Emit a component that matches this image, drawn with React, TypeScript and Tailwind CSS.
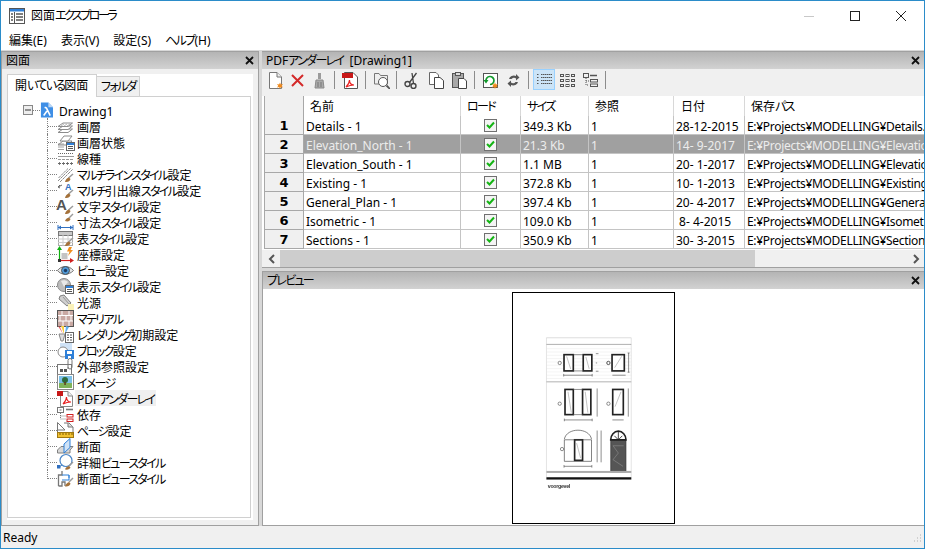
import React from "react";

const J = ({ t, tight }: { t: string; tight?: boolean }) => (
  <>
    {t.split(/([\u3040-\u30FF]+)/).map((s, i) =>
      i % 2 === 1 ? (
        <span key={i} className={tight ? "tracking-[-2.5px]" : "tracking-[-1.7px]"}>{s}</span>
      ) : (
        <span key={i}>{s}</span>
      )
    )}
  </>
);

const B = () => (
  <g>
    <path d="M16 8 L11.5 12" stroke="#9a9a9a" strokeWidth="1.5" />
    <path d="M8 16 C8.5 13.5 10 12 12 11.5 L13.5 13 C13 15 11 16.5 8 16 Z" fill="#a4713a" />
  </g>
);
const MiniDoc = ({ x = 9, y = 8 }: { x?: number; y?: number }) => (
  <g>
    <rect x={x + 0.5} y={y + 0.5} width="8" height="8" fill="#fff" stroke="#666" />
    <rect x={x + 1} y={y + 1} width="7" height="2" fill="#2f80d8" />
    <path d={`M${x + 2} ${y + 4.5}h5M${x + 2} ${y + 6.5}h5`} stroke="#555" />
  </g>
);

const treeIcons: React.ReactNode[] = [
  <g fill="#fff" stroke="#8c8c8c"><path d="M1 14.5 L6 11 H15.5 L11 14.5Z" /><path d="M1 11.5 L6 8 H15.5 L11 11.5Z" /><path d="M1 8.5 L6 5 H15.5 L11 8.5Z" /><path d="M4 8l3-2M7 8l3-2M10 8l3-2" strokeWidth=".6" /></g>,
  <g><g fill="#fff" stroke="#8c8c8c"><path d="M1 11 L6 7 H15 L11 11Z" /><path d="M3 7 L7 2 H15 L11 7Z" /><path d="M1 10h6M1 13h6M1 15.5h6" strokeWidth=".8" /></g><MiniDoc /></g>,
  <g stroke="#666"><path d="M1 3.5h16" strokeDasharray="1 1" /><path d="M1 6.5h16" stroke="#999" /><path d="M1 9.5h16" strokeDasharray="3 1" stroke="#999" /><path d="M1 13.5h16" strokeDasharray="3 1" strokeWidth="1" /><path d="M2.5 12v3M6.5 12v3M10.5 12v3M14.5 12v3" strokeWidth=".8" /></g>,
  <g><path d="M1 15 L14 2M3 16 L16 3M1.5 12 L11 2.5" stroke="#8c8c8c" strokeWidth="1" strokeDasharray="3 .7" /><B /></g>,
  <g><text x="8" y="8" fontSize="9" fontWeight="700" fill="#2f6fc0" fontFamily="Liberation Sans">A</text><path d="M1 5 L5 3M1 5l2-2M1 5l2 1" stroke="#666" fill="none" /><B /></g>,
  <g><text x="-1" y="12" fontSize="15" fontWeight="700" fill="#555" fontFamily="Liberation Sans">A</text><B /></g>,
  <g><path d="M1 13.5 H16 M1 11v5M16 11v5" stroke="#2f6fc0" fill="none" /><path d="M1 13.5l3-2v4ZM16 13.5l-3-2v4Z" fill="#2f6fc0" /><g transform="translate(0,-7)"><path d="M8 14 C8.5 12 10 11 12 10.5 L13.5 12 C13 14 11 15 8 14Z" fill="#a4713a" /><path d="M16 7 L12 11" stroke="#9a9a9a" strokeWidth="1.5" /></g></g>,
  <g><rect x="1.5" y="1.5" width="14" height="14" fill="#fff" stroke="#aaa" /><rect x="1.5" y="1.5" width="14" height="4" fill="#c8c8c8" stroke="#777" /><path d="M1 9h15M1 12.5h15M6 5v11M11 5v11" stroke="#ccc" /><B /></g>,
  <g><path d="M2.5 15V3" stroke="#10b010" strokeWidth="1.2" /><path d="M2.5 0l-2.5 4h5Z" fill="#10b010" /><path d="M2 14.5h13" stroke="#d02020" strokeWidth="1.2" /><path d="M17 14.5l-4-2.5v5Z" fill="#d02020" /><rect x="4.5" y="7" width="6" height="6" fill="#c4c4c4" /><rect x="1" y="13" width="3" height="3" fill="#333" /><path d="M12 1 L15 1 L13.5 4 L16 4 L11 10 L12.5 5.5 L10 5.5Z" fill="#f09020" /></g>,
  <g><path d="M0.5 8.5 C4 3.5 12 3 16.5 8.5 C12 13.5 4 13.5 0.5 8.5Z" fill="#e6e6e6" stroke="#777" /><circle cx="8.5" cy="8.5" r="4" fill="#4f9ad8" stroke="#555" /><circle cx="8.5" cy="8.5" r="1.7" fill="#1c3c64" /></g>,
  <g><circle cx="7" cy="7" r="6.5" fill="#bdbdbd" stroke="#8a8a8a" /><path d="M4 3 C6 1.5 9 2 11 4 L7 9 Z" fill="#e8e8e8" /><MiniDoc x={8} y={7} /></g>,
  <g><path d="M3 2 L7 1 L14 9 L10 12 L2 5Z" fill="#cfcfcf" stroke="#808080" /><path d="M6 3 L12 10" stroke="#999" /><rect x="11" y="10" width="6" height="6" fill="#fbf2b8" /></g>,
  <g><rect x=".5" y=".5" width="16" height="16" fill="#c9a9a3" stroke="#555" /><path d="M1 5.5h15M1 11h15M5 1v4M12 1v4M3 6v5M9 6v5M14 6v5M6 11v5M12 11v5" stroke="#fff" /></g>,
  <g><path d="M1 0 L6 8 L3 1Z" fill="#f06060" /><path d="M4 0 L7 8 L7 0Z" fill="#f8d040" /><path d="M9 0 L8 8 L12 1Z" fill="#60b0f0" /><path d="M2 8 L8 8 L6 15 L4 15Z" fill="#ddd" stroke="#888" /><rect x="8.5" y="6.5" width="8" height="10" fill="#fff" stroke="#666" /><path d="M10 9h5M10 11.5h5M10 14h5" stroke="#555" strokeDasharray="2 1" /></g>,
  <g><rect x="3" y="1" width="12" height="12" fill="#cfe2f6" /><circle cx="6" cy="10" r="5" fill="#fff" stroke="#888" /><rect x="8" y="8" width="9" height="9" fill="#2f80d8" /><rect x="10" y="9" width="5" height="3" fill="#fff" /><rect x="11" y="14" width="3" height="3" fill="#fff" /></g>,
  <g><rect x=".5" y="6.5" width="14" height="10" fill="#fff" stroke="#777" /><rect x="3" y="11" width="3" height="3" fill="#555" /><rect x="7" y="11" width="3" height="3" fill="#555" /><path d="M11 11V2.5a2 2 0 0 1 4 0V9a2 2 0 0 1-4 0" fill="none" stroke="#777" /></g>,
  <g><rect x=".5" y=".5" width="16" height="15" fill="#fff" stroke="#888" /><rect x="2" y="2" width="13" height="7" fill="#7dc0e8" /><rect x="2" y="9" width="13" height="5" fill="#7fb35a" /><circle cx="8" cy="6" r="3" fill="#2d6a3a" /><rect x="7.3" y="8" width="1.5" height="3" fill="#5c3a1c" /></g>,
  <g><path d="M3.5 1.5H11L15.5 6V16.5H3.5Z" fill="#fff" stroke="#888" /><path d="M11 1.5V6H15.5" fill="#eee" stroke="#888" /><rect x="0" y="1" width="6" height="5" fill="#c81818" /><path d="M6 14 C9 11 9.5 8 9.5 7 C9.5 10 11 12 14 12 C11 12 8 13 6 14Z" fill="none" stroke="#e82020" strokeWidth="1.1" /></g>,
  <g><rect x=".5" y="1.5" width="6" height="5" fill="#fff" stroke="#777" /><path d="M2.5 4h2" stroke="#777" /><path d="M9 3.5h7" stroke="#777" strokeWidth="1.6" /><path d="M3.5 7v6h5M3.5 10h5" stroke="#777" strokeDasharray="1 1" fill="none" /><rect x="10" y="8.5" width="6" height="2.5" fill="#fff" stroke="#d02020" /><rect x="10" y="13" width="6" height="2.5" fill="#fff" stroke="#d02020" /></g>,
  <g><path d="M.5 .5 L8 8 H.5Z M.5 8 V11 H16 V5 L12 1 H7" fill="#fff" stroke="#777" /><path d="M11 1V5H16" fill="#ddd" stroke="#777" /><rect x=".5" y="10.5" width="16" height="5" fill="#f0c030" stroke="#a07810" /><path d="M3 11v2M6 11v2M9 11v2M12 11v2M15 11v2" stroke="#805f00" /></g>,
  <g><path d="M.5 12 L4 8.5 H16 L13 12 V15 H.5Z" fill="#d8d8d8" stroke="#808080" /><path d="M7 15 V6 L13 .5 V9.5 Z" fill="#cfe2f6" stroke="#2f80d8" /></g>,
  <g><circle cx="9" cy="6.5" r="6" fill="#fff" stroke="#4a86c8" strokeWidth="1.2" /><rect x="0" y="11" width="3.5" height="3.5" fill="#2f6fc0" /><path d="M3 12.5 L5 11" stroke="#4a86c8" /><path d="M16 8 L12 12" stroke="#9a9a9a" strokeWidth="1.5" /><path d="M8 15.5 C8.5 13.5 10 12.5 12 12 L13.5 13.5 C13 15 11 16 8 15.5Z" fill="#a4713a" /></g>,
  <g><path d="M1.5 16V5 H5 V1 M1.5 16H5V12H8V16" fill="#fff" stroke="#777" strokeWidth="1.3" /><path d="M5 5h7v5H5M12 5v3" fill="none" stroke="#2f80d8" /><path d="M16 8 L12 12" stroke="#9a9a9a" strokeWidth="1.5" /><path d="M8 16.5 C8.5 14 10 13 12 12 L13.5 13.5 C13 15.5 11 17 8 16.5Z" fill="#a4713a" /></g>,
];

const treeLabels = [
  "画層", "画層状態", "線種", "マルチラインスタイル設定", "マルチ引出線スタイル設定", "文字スタイル設定",
  "寸法スタイル設定", "表スタイル設定", "座標設定", "ビュー設定", "表示スタイル設定", "光源", "マテリアル",
  "レンダリング初期設定", "ブロック設定", "外部参照設定", "イメージ", "PDFアンダーレイ", "依存", "ページ設定",
  "断面", "詳細ビュースタイル", "断面ビュースタイル",
];

const rows = [
  ["Details - 1", "349.3 Kb", "28-12-2015", "E:¥Projects¥MODELLING¥Details.pdf"],
  ["Elevation_North - 1", "21.3 Kb", "14- 9-2017", "E:¥Projects¥MODELLING¥Elevation.pdf"],
  ["Elevation_South - 1", "1.1 MB", "20- 1-2017", "E:¥Projects¥MODELLING¥Elevation.pdf"],
  ["Existing - 1", "372.8 Kb", "10- 1-2013", "E:¥Projects¥MODELLING¥Existing.pdf"],
  ["General_Plan - 1", "397.4 Kb", "20- 4-2017", "E:¥Projects¥MODELLING¥General.pdf"],
  ["Isometric - 1", "109.0 Kb", " 8- 4-2015", "E:¥Projects¥MODELLING¥Isometric.pdf"],
  ["Sections - 1", "350.9 Kb", "30- 3-2015", "E:¥Projects¥MODELLING¥Sections.pdf"],
];

const Star = () => <path d="M13 10.5l.9 2 2.1-.6-1.2 1.8 1.2 1.8-2.1-.5-.9 2-.9-2-2.1.5 1.2-1.8-1.2-1.8 2.1.6Z" fill="#f08a1d" />;
const tools: [string, React.ReactNode][] = [
  ["", <g><path d="M2.5 .5H10L14.5 5V16.5H2.5Z" fill="#fff" stroke="#777" /><path d="M10 .5V5H14.5" fill="#eee" stroke="#777" /><Star /></g>],
  ["", <path d="M3 3 L14 14 M14 3 L3 14" stroke="#d42a2a" strokeWidth="2" />],
  ["", <g><rect x="7" y="1" width="3" height="6" fill="#9b9b9b" /><path d="M5 8h7l1 8H4Z" fill="#aaa" stroke="#8a8a8a" /><path d="M7 10v5M10 10v5" stroke="#777" /></g>],
  ["sep", null],
  ["", <g><path d="M2.5 .5H11L15.5 5V16.5H2.5Z" fill="#fff" stroke="#555" /><rect x="0" y="1" width="11" height="5" fill="#c81818" /><path d="M4 15 C7 12 7.5 9 7.5 8 C7.5 11 9 13 12 13 C9 13 6 14 4 15Z" fill="none" stroke="#e82020" strokeWidth="1.2" /></g>],
  ["sep", null],
  ["", <g><path d="M1.5 1.5H6L7.5 3.5H14.5V12H1.5Z" fill="#eee" stroke="#777" /><circle cx="10" cy="10" r="4.5" fill="#fff" stroke="#555" /><path d="M13.5 13.5 L17 17" stroke="#555" strokeWidth="1.8" /></g>],
  ["sep", null],
  ["", <g fill="none" stroke="#444"><circle cx="3.5" cy="12" r="2.5" strokeWidth="1.4" /><circle cx="9.5" cy="14" r="2.5" strokeWidth="1.4" /><path d="M5.5 10.5 L12.5 1 M9.5 11.5 L8 1" strokeWidth="1.3" /></g>],
  ["c", <g><path d="M1.5 .5H8L10.5 3V12.5H1.5Z" fill="#fff" stroke="#666" /><path d="M6.5 5.5H12L15.5 8.5V16.5H6.5Z" fill="#fff" stroke="#444" /></g>],
  ["p", <g><rect x="1.5" y="1.5" width="11" height="14" fill="#a8a8a8" stroke="#555" /><rect x="4.5" y=".5" width="5" height="3" fill="#ddd" stroke="#555" /><path d="M7.5 6.5H13L15.5 9V16.5H7.5Z" fill="#fff" stroke="#444" /></g>],
  ["sep", null],
  ["", <g><rect x="1.5" y="1.5" width="14" height="14" fill="#fff" stroke="#555" /><path d="M4 9 A4 4 0 1 1 8 12.5" fill="none" stroke="#129a2c" strokeWidth="1.7" /><path d="M1.5 8 L6.5 8 L4 11.5Z" fill="#129a2c" /><Star /></g>],
  ["p", <g fill="#555"><path d="M4 7 A5 4 0 0 1 11 4 V2 L14.5 5.5 L11 8.5 V6.5 A3 3 0 0 0 6.5 7Z" /><path d="M13 10 A5 4 0 0 1 6 13 V15 L2.5 11.5 L6 8.5 V10.5 A3 3 0 0 0 10.5 10Z" /></g>],
  ["sep", null],
  ["on", <g stroke="#555" strokeWidth="1"><path d="M1 3.5h2M5 3.5h11M1 6.5h2M5 6.5h11M1 9.5h2M5 9.5h11M1 12.5h2M5 12.5h11" strokeDasharray="1.5 .5" /></g>],
  ["p", <g fill="none" stroke="#555"><rect x="1.5" y="2.5" width="3" height="2" /><rect x="7" y="2.5" width="3" height="2" /><rect x="12.5" y="2.5" width="3" height="2" /><rect x="1.5" y="7.5" width="3" height="2" /><rect x="7" y="7.5" width="3" height="2" /><rect x="12.5" y="7.5" width="3" height="2" /><rect x="1.5" y="12.5" width="3" height="2" /><rect x="7" y="12.5" width="3" height="2" /><rect x="12.5" y="12.5" width="3" height="2" /></g>],
  ["p", <g fill="none" stroke="#555"><rect x="1.5" y="1.5" width="5" height="4" /><path d="M8 3.5h7" strokeWidth="1.5" /><path d="M4 6v7h3M4 9h3" strokeDasharray="1 1" /><rect x="8.5" y="7.5" width="7" height="2.5" /><rect x="8.5" y="12" width="7" height="2.5" /></g>],
  ["sep", null],
];

const Header = ({ title }: { title: string }) => (
  <div className="h-[18px] shrink-0 flex items-center justify-between pl-[4px] pr-[4px] bg-gradient-to-b from-[#b4b4b4] to-[#d2d2d2] border-t border-[#a0a0a0] text-[12px] leading-[20px] text-black">
    <span className="whitespace-pre"><J t={title} /></span>
    <svg width="9" height="9" viewBox="0 0 9 9"><path d="M1 1 L8 8 M8 1 L1 8" stroke="#111" strokeWidth="1.8" /></svg>
  </div>
);

const Check = () => (
  <span className="w-[13px] h-[13px] border border-[#707070] bg-[#f4f4f4] flex items-center justify-center">
    <svg width="9" height="8" viewBox="0 0 9 8"><path d="M1 4 L3.5 6.5 L8 1.5" fill="none" stroke="#14b414" strokeWidth="2" /></svg>
  </span>
);

const cols = "grid-cols-[40px_157px_60px_68px_85px_71px_180px]";

const Drawing = () => (
  <svg viewBox="38 8 486 692" className="w-full h-full blur-[0.5px]">
    <g fill="none" stroke="#777" strokeWidth="1.2">
      <path d="M139 142V570M395 142V570" stroke="#bbb" />
      <path d="M139 142H395" stroke="#ccc" strokeWidth="2" />
      <path d="M139 162H395M139 275H395" stroke="#888" strokeWidth="2" />
      <path d="M139 175H395M139 185H395M139 195H395M139 205H395M139 215H395M139 225H395M139 235H395M139 245H395M139 255H395M139 265H395" stroke="#e2e2e2" />
    </g>
    <g fill="#fff" stroke="#222" strokeWidth="5">
      <rect x="192" y="193" width="28" height="49" /><rect x="250" y="193" width="26" height="49" /><rect x="337" y="193" width="37" height="49" />
      <rect x="195" y="298" width="25" height="76" /><rect x="248" y="298" width="25" height="76" /><rect x="339" y="298" width="32" height="76" />
      <rect x="224" y="450" width="24" height="62" />
    </g>
    <g fill="none" stroke="#555" strokeWidth="2">
      <path d="M220 193H250M220 242H250M220 298H248M220 374H248" />
      <path d="M200 198L212 236M258 200L268 236M345 232L366 198M204 305L214 368M256 305L264 368M346 350L364 305M230 460L242 505" stroke="#888" strokeWidth="1.5" />
      <path d="M193 515V450H275V515M193 515H275" stroke="#444" />
      <path d="M193 448C200 412 268 412 275 448" stroke="#444" />
      <path d="M191 255H277M191 251v8M277 251v8M193 390H277M193 386v8M277 386v8M338 255H378M338 390H372M192 530H276M192 526v8M276 526v8" />
      <path d="M387 188V246M384 188h6M384 246h6M292 295V380M386 295V380M292 422V518M304 422V518" />
      <path d="M288 190h8M288 243h8M288 218h4" />
    </g>
    <path d="M333 547V450H379V547Z" fill="#555" stroke="#333" strokeWidth="2" />
    <path d="M333 450A23 26 0 0 1 379 450Z" fill="#fff" stroke="#222" strokeWidth="5" />
    <path d="M356 450V426M344 438L356 450L368 438" stroke="#222" strokeWidth="2.5" fill="none" />
    <path d="M340 468L356 490L340 510L370 530M340 468H372" stroke="#999" strokeWidth="1.5" fill="none" />
    <rect x="139" y="544" width="256" height="6" fill="#aaa" />
    <rect x="139" y="563" width="256" height="7" fill="#111" />
    <circle cx="179" cy="218" r="5" fill="none" stroke="#555" strokeWidth="2" /><circle cx="326" cy="218" r="5" fill="none" stroke="#333" strokeWidth="2.5" />
    <circle cx="179" cy="341" r="5" fill="none" stroke="#555" strokeWidth="2" /><circle cx="326" cy="341" r="5" fill="none" stroke="#555" strokeWidth="2" />
    <circle cx="186" cy="478" r="5" fill="none" stroke="#555" strokeWidth="2" />
    <text x="143" y="596" fontSize="16" fontWeight="700" fill="#333" fontFamily="Liberation Sans" textLength="68">voorgevel</text>
  </svg>
);

export default function App() {
  return (
    <div className="w-[925px] h-[549px] flex flex-col overflow-hidden bg-white border border-[#2b8cc9] text-[12px] text-black font-['Noto_Sans','Noto_Sans_CJK_JP',sans-serif] [font-feature-settings:'palt'] [font-kerning:normal]">
      <div className="h-[29px] shrink-0 flex items-center pl-[8px]">
        <svg width="16" height="16" viewBox="0 0 16 16" className="mr-[6px]">
          <rect x=".5" y=".5" width="15" height="15" fill="#fff" stroke="#555" />
          <rect x="1" y="1" width="14" height="2.5" fill="#2f80d8" />
          <path d="M5.5 4v11" stroke="#555" />
          <path d="M2 6h2M2 9h2M2 12h2M7 6h7M7 9h7M7 12h7" stroke="#555" strokeWidth="1.4" />
        </svg>
        <span className="text-[12px]"><J t="図面エクスプローラ" tight /></span>
        <div className="ml-auto flex">
          <div className="w-[46px] h-[29px] flex items-center justify-center"><svg width="10" height="10"><path d="M0 5.5h10" stroke="#c8c8c8" /></svg></div>
          <div className="w-[46px] h-[29px] flex items-center justify-center"><svg width="10" height="10"><rect x=".5" y=".5" width="9" height="9" fill="none" stroke="#222" /></svg></div>
          <div className="w-[46px] h-[29px] flex items-center justify-center"><svg width="10" height="10"><path d="M0 0 L10 10 M10 0 L0 10" stroke="#222" /></svg></div>
        </div>
      </div>

      <div className="h-[20px] shrink-0 flex items-center pl-[8px] pt-[1px] gap-[14px] leading-none">
        <span>編集(E)</span><span>表示(V)</span><span>設定(S)</span><span><J t="ヘルプ(H)" /></span>
      </div>

      <div className="flex-1 min-h-0 flex gap-[3px] bg-[#d8d8d8]">
        <div className="w-[258px] shrink-0 flex flex-col border-l border-r border-b border-[#a0a0a0] mt-[1px] bg-[#f0f0f0]">
          <Header title="図面" />
          <div className="flex-1 min-h-0 flex flex-col ml-[5px] mr-[5px] mt-[5px] mb-[5px] bg-white pr-[2px] pb-[2px]">
            <div className="h-[22px] shrink-0 flex items-end">
              <div className="w-[90px] h-[23px] -mb-[1px] relative z-10 bg-white border border-b-0 border-[#d0d0d0] flex items-center pl-[7px] whitespace-nowrap"><J t="開いている図面" /></div>
              <div className="w-[43px] h-[20px] bg-[#f0f0f0] border border-l-0 border-b-0 border-[#d0d0d0] flex items-center pl-[4px] whitespace-nowrap"><J t="フォルダ" /></div>
            </div>
            <div className="flex-1 min-h-0 border border-[#d0d0d0] pt-[5px]">
              <div className="h-[16px] flex items-center pl-[15px]">
                <svg width="10" height="10" className="shrink-0"><rect x=".5" y=".5" width="9" height="9" fill="#eee" stroke="#888" /><path d="M2 5h6" stroke="#333" /></svg>
                <span className="w-[7px] h-0 border-t border-dotted border-[#808080]" />
                <svg width="13" height="16" viewBox="0 0 14 16" className="mr-[6px]">
                  <path d="M1 0H9L14 5V16H1Z" fill="#3f8fe6" />
                  <path d="M9 0V5H14Z" fill="#bcd8f6" />
                  <path d="M5 5 L7 6 L11 14 M7.5 9 L4 14" stroke="#fff" strokeWidth="1.7" fill="none" />
                </svg>
                <span className="h-[16px] leading-[20px]">Drawing1</span>
              </div>
              {treeLabels.map((label, i) => {
                const last = i === treeLabels.length - 1;
                return (
                  <div key={label} className="h-[16px] flex items-start pl-[39px]">
                    <div className={last ? "w-[10px] h-[9px] border-l border-dotted border-[#808080]" : "w-[10px] h-[16px] border-l border-dotted border-[#808080]"}>
                      <div className="h-[9px] border-b border-dotted border-[#808080]" />
                    </div>
                    <svg width="17" height="17" viewBox="0 0 17 17" className="shrink-0 mr-[1px] overflow-visible">{treeIcons[i]}</svg>
                    <span className={label.startsWith("PDF") ? "bg-[#f0f0f0] px-[2px] h-[16px] leading-[20px] whitespace-nowrap" : "px-[2px] h-[16px] leading-[20px] whitespace-nowrap"}><J t={label} /></span>
                  </div>
                );
              })}
            </div>
          </div>
        </div>

        <div className="flex-1 min-w-0 flex flex-col mt-[1px]">
          <div className="h-[199px] shrink-0 flex flex-col bg-[#f0f0f0]">
            <Header title="PDFアンダーレイ  [Drawing1]" />
            <div className="h-[27px] shrink-0 flex items-start pl-[2px] bg-[#f0f0f0]">
              {tools.map(([kind, icon], i) =>
                kind === "sep" ? (
                  <span key={i} className="w-px h-[18px] mt-[2px] bg-[#8c8c8c] mx-[4px]" />
                ) : (
                  <span key={i} className={
                    kind === "on" ? "w-[22px] h-[21px] flex items-center justify-center bg-[#cce4f7] border border-[#99d1ff]" :
                    kind === "c" ? "w-[22px] h-[22px] ml-[2px] flex items-center justify-center" :
                    kind === "p" ? "w-[22px] h-[22px] ml-[1px] flex items-center justify-center" :
                    "w-[22px] h-[22px] flex items-center justify-center"
                  }>
                    <svg width="17" height="17" viewBox="0 0 17 17">{icon}</svg>
                  </span>
                )
              )}
            </div>
            <div className="flex-1 min-h-0 overflow-hidden bg-white whitespace-nowrap pl-[2px]">
              <div className={`grid ${cols} h-[20px] w-[661px]`}>
                <div className="bg-[#f0f0f0] border-r border-b border-l border-[#a8a8a8]" />
                <div className="pl-[6px] leading-[22px] border-r border-[#d8d8d8]">名前</div>
                <div className="pl-[6px] leading-[22px] border-r border-[#d8d8d8]"><J t="ロード" /></div>
                <div className="pl-[6px] leading-[22px] border-r border-[#d8d8d8]"><J t="サイズ" /></div>
                <div className="pl-[6px] leading-[22px] border-r border-[#d8d8d8]">参照</div>
                <div className="pl-[7px] leading-[22px] border-r border-[#d8d8d8]">日付</div>
                <div className="pl-[6px] leading-[22px]">保存<J t="パス" /></div>
              </div>
              {rows.map((r, i) => {
                const sel = i === 1;
                const base = sel
                  ? "h-[19px] border-b border-r border-[#c4c4c4] bg-[#a0a0a0] text-[#ececec] overflow-hidden"
                  : "h-[19px] border-b border-r border-[#c4c4c4] overflow-hidden";
                const cell = base + " pt-[2px] leading-[18px]";
                return (
                  <div key={i} className={`grid ${cols} h-[19px] w-[661px]`}>
                    <div className="h-[19px] pt-[2px] bg-[#f0f0f0] border-l border-r border-b border-[#a8a8a8] flex items-center justify-center font-bold text-[13px] font-['DejaVu_Sans',sans-serif]">{i + 1}</div>
                    <div className={`${cell} pl-[2px]`}>{r[0]}</div>
                    <div className={`${base} flex items-center justify-center`}><Check /></div>
                    <div className={`${cell} pl-[2px]`}>{r[1]}</div>
                    <div className={`${cell} pl-[2px]`}>1</div>
                    <div className={`${cell} pl-[2px] whitespace-pre`}>{r[2]}</div>
                    <div className={`${cell} pl-[2px] border-r-0 tracking-[-0.3px]`}>{r[3]}</div>
                  </div>
                );
              })}
            </div>
          </div>

          <div className="h-[18px] shrink-0 flex bg-[#f0f0f0] pl-[1px] border-b border-[#a0a0a0]">
            <div className="w-[17px] flex items-center justify-center"><svg width="8" height="10"><path d="M6 1 L2 5 L6 9" fill="none" stroke="#555" strokeWidth="2" /></svg></div>
            <div className="w-[475px] bg-[#cdcdcd]" />
            <div className="flex-1" />
            <div className="w-[17px] flex items-center justify-center"><svg width="8" height="10"><path d="M2 1 L6 5 L2 9" fill="none" stroke="#555" strokeWidth="2" /></svg></div>
          </div>

          <div className="flex-1 min-h-0 mt-[3px] flex flex-col border-b border-l border-[#a0a0a0]">
            <Header title="プレビュー" />
            <div className="flex-1 min-h-0 bg-white flex items-center justify-center pt-[1px]">
              <div className="w-[163px] h-[232px] border border-black bg-white">
                <Drawing />
              </div>
            </div>
          </div>
        </div>
      </div>

      <div className="h-[22px] shrink-0 flex items-center pl-[2px] pr-[2px] pt-[2px] bg-[#f0f0f0] justify-between">
        <span>Ready</span>
        <svg width="10" height="10" viewBox="0 0 10 10"><path d="M8 2h1M5 5h1M8 5h1M2 8h1M5 8h1M8 8h1" stroke="#b0b0b0" /></svg>
      </div>
    </div>
  );
}
